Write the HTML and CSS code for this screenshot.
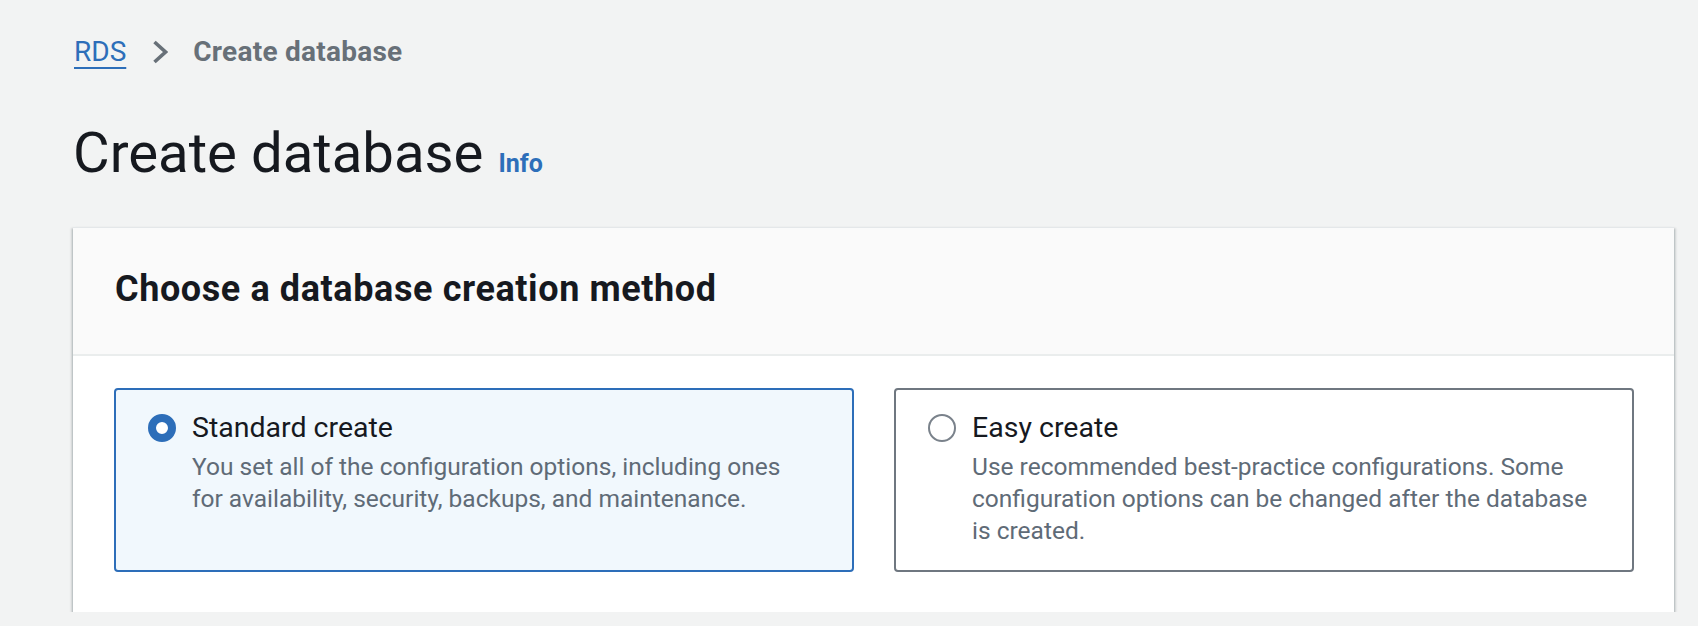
FILE: index.html
```html
<!DOCTYPE html>
<html lang="en">
<head>
<meta charset="utf-8">
<title>Create database</title>
<link rel="stylesheet" href="styles.css">
</head>
<body>
<div class="page">
  <nav class="breadcrumbs">
    <a class="crumb-link" href="#">RDS</a>
    <svg class="crumb-sep" width="16" height="24" viewBox="0 0 16 24" aria-hidden="true"><polyline points="2.5,2 13.5,12 2.5,22" fill="none" stroke="#687078" stroke-width="3.6" stroke-linejoin="miter"/></svg>
    <span class="crumb-current">Create database</span>
  </nav>
  <h1 class="page-title">Create database <a class="info-link" href="#">Info</a></h1>
  <section class="container">
    <header class="container-header">
      <h2 class="container-title">Choose a database creation method</h2>
    </header>
    <div class="container-body">
      <div class="tiles">
        <label class="tile tile-selected">
          <span class="radio radio-checked"></span>
          <span class="tile-text">
            <span class="tile-label">Standard create</span>
            <span class="tile-desc">You set all of the configuration options, including ones for availability, security, backups, and maintenance.</span>
          </span>
        </label>
        <label class="tile">
          <span class="radio"></span>
          <span class="tile-text">
            <span class="tile-label">Easy create</span>
            <span class="tile-desc">Use recommended best-practice configurations. Some configuration options can be changed after the database is created.</span>
          </span>
        </label>
      </div>
    </div>
  </section>
</div>
</body>
</html>
```

FILE: styles.css
```css
html, body {
  margin: 0;
  padding: 0;
}
body {
  background: #f2f3f3;
  font-family: Roboto, "Open Sans", "Liberation Sans", sans-serif;
  color: #16191f;
}
.page {
  padding: 32px 24px 0 73px;
}
.breadcrumbs {
  display: flex;
  align-items: center;
  height: 40px;
  line-height: 40px;
  font-size: 28px;
}
.crumb-link {
  color: #2d6eb9;
  text-decoration: underline;
  text-decoration-thickness: 2px;
  text-underline-offset: 6px;
  margin-left: 1px;
}
.crumb-sep {
  margin: 0 25px 0 26px;
  display: block;
}
.crumb-current {
  color: #687078;
  font-weight: 700;
  letter-spacing: 0.25px;
}
.page-title {
  margin: 45px 0 0 0;
  font-size: 56.3px;
  line-height: 72px;
  font-weight: 400;
  color: #16191f;
}
.info-link {
  font-size: 25px;
  font-weight: 700;
  color: #2d6eb9;
  text-decoration: none;
  margin-left: 1px;
}
.container {
  margin-top: 27px;
  background: #ffffff;
  border-top: 1px solid #e4e7e9;
  box-shadow: 0 2px 2px 0 rgba(0, 28, 36, 0.35), 2px 1px 2px 0 rgba(0, 28, 36, 0.12), -2px 1px 2px 0 rgba(0, 28, 36, 0.12);
}
.container-header {
  background: #fafafa;
  border-bottom: 2px solid #eaeded;
  padding: 39px 40px 43px 42px;
}
.container-title {
  margin: 0;
  font-size: 36px;
  line-height: 44px;
  font-weight: 700;
  letter-spacing: 0.6px;
  color: #16191f;
}
.container-body {
  padding: 32px 40px 40px 41px;
}
.tiles {
  display: grid;
  grid-template-columns: 1fr 1fr;
  column-gap: 40px;
}
.tile {
  display: flex;
  align-items: flex-start;
  gap: 16px;
  border: 2px solid #6f7780;
  border-radius: 4px;
  padding: 18px 40px 23px 32px;
  background: #ffffff;
}
.tile-selected {
  border-color: #2d6eb9;
  background: #f1f8fd;
}
.radio {
  flex: none;
  box-sizing: border-box;
  width: 28px;
  height: 28px;
  margin-top: 6px;
  border-radius: 50%;
  border: 2.5px solid #7a828b;
  background: #ffffff;
}
.radio-checked {
  border: 8px solid #2d6eb9;
  background: #ffffff;
}
.tile-text {
  display: flex;
  flex-direction: column;
}
.tile-label {
  font-size: 28.5px;
  line-height: 40px;
  color: #16191f;
}
.tile-desc {
  margin-top: 3px;
  font-size: 24.5px;
  line-height: 32px;
  color: #5f6b77;
}
```
